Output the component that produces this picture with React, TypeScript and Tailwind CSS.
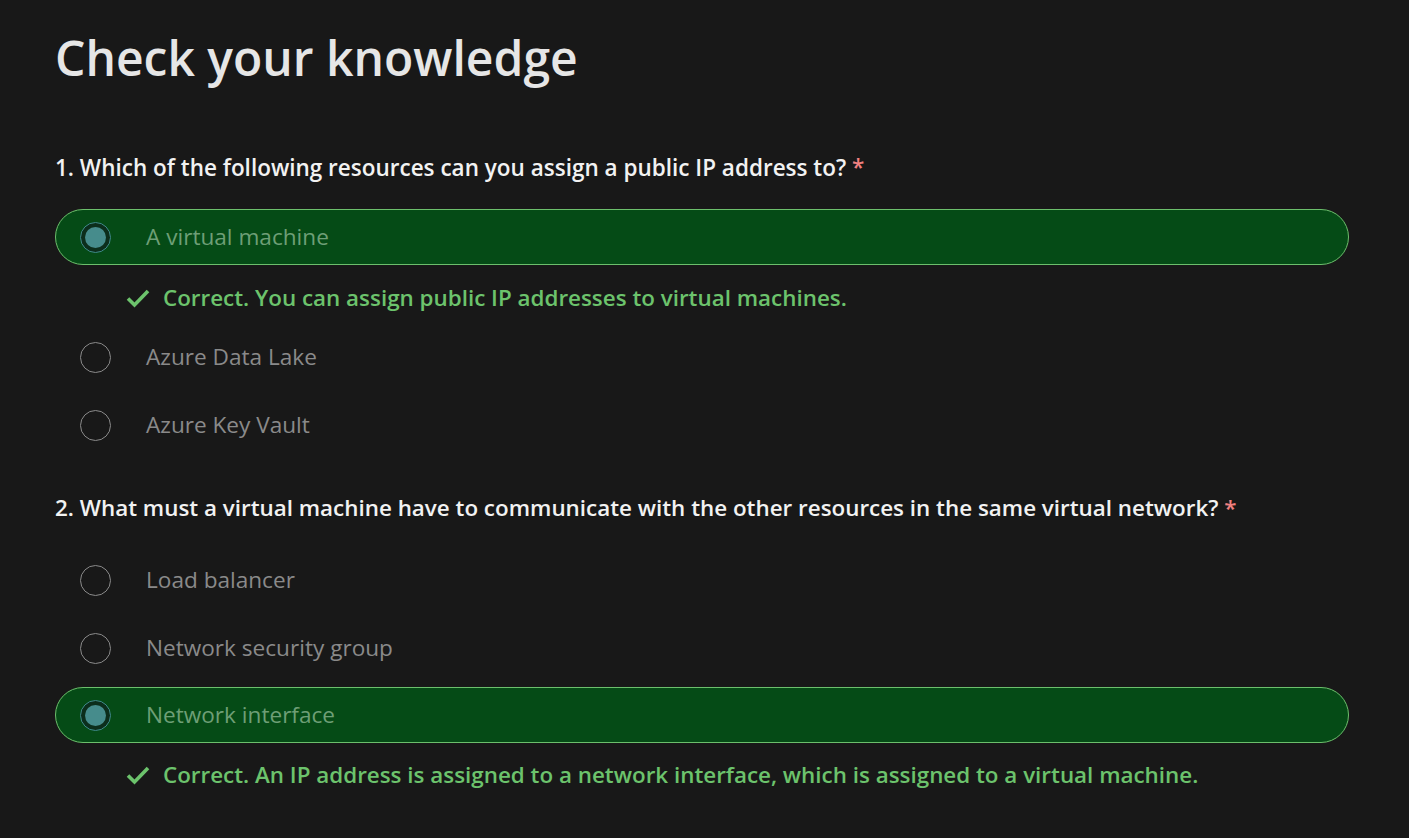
import React from "react";

const font = { fontFamily: '"Segoe UI", "Open Sans", "Noto Sans", sans-serif' };

function Radio({ selected }: { selected: boolean }) {
  if (selected) {
    return (
      <div className="w-[31px] h-[31px] rounded-full border border-[#3f8a8a] bg-[#0c2e1c] flex items-center justify-center shrink-0">
        <div className="w-[21px] h-[21px] rounded-full bg-[#468c8c]" />
      </div>
    );
  }
  return <div className="w-[31px] h-[31px] rounded-full border border-[#8a8a8a] shrink-0" />;
}

function Check() {
  return (
    <svg width="24" height="20" viewBox="0 0 24 20" className="shrink-0">
      <path d="M2 10.5 L8.5 17 L22 3" fill="none" stroke="#6cc36c" strokeWidth="3.6" />
    </svg>
  );
}

function Option({ label, selected, feedback, fbGap }: { label: string; selected?: boolean; feedback?: string; fbGap?: string }) {
  return (
    <div className="flex flex-col">
      <div
        className={
          selected
            ? "h-[56px] rounded-full border border-[#6cbf6c] bg-[#054b16] flex items-center pl-[24px]"
            : "h-[56px] rounded-full border border-transparent flex items-center pl-[24px]"
        }
      >
        <Radio selected={!!selected} />
        <span
          className={
            selected
              ? "ml-[35px] text-[22.6px] leading-[30px] text-[#6e9f76]"
              : "ml-[35px] text-[22.6px] leading-[30px] text-[#8a8a8a]"
          }
        >
          {label}
        </span>
      </div>
      {feedback && (
        <div className={fbGap === "a" ? "flex items-center pl-[71px] h-[44px] mt-[11px] mb-[-3px]" : "flex items-center pl-[71px] h-[44px] mt-[10px]"}>
          <Check />
          <span className="ml-[13px] text-[22.4px] leading-[30px] font-semibold text-[#6cc36c]">{feedback}</span>
        </div>
      )}
    </div>
  );
}

export default function App() {
  return (
    <div className="min-h-[838px] w-full bg-[#181818] text-[#e6e6e6] pl-[55px] pr-[60px] pt-[26px]" style={font}>
      <h1 className="text-[48px] leading-[64px] font-semibold text-[#e6e6e6]">Check your knowledge</h1>
      <div className="mt-[63px] text-[22.5px] leading-[30px] font-semibold text-[#f2f2f2]">
        1. Which of the following resources can you assign a public IP address to? <span className="text-[#f08080]">*</span>
      </div>
      <div className="mt-[26px] flex flex-col gap-[12px]">
        <Option label="A virtual machine" selected fbGap="a" feedback="Correct. You can assign public IP addresses to virtual machines." />
        <Option label="Azure Data Lake" />
        <Option label="Azure Key Vault" />
      </div>
      <div className="mt-[40px] text-[22.4px] leading-[30px] font-semibold text-[#f2f2f2]">
        2. What must a virtual machine have to communicate with the other resources in the same virtual network? <span className="text-[#f08080]">*</span>
      </div>
      <div className="mt-[29px] flex flex-col gap-[12px]">
        <Option label="Load balancer" />
        <Option label="Network security group" />
        <div className="mt-[-1px]">
          <Option label="Network interface" selected feedback="Correct. An IP address is assigned to a network interface, which is assigned to a virtual machine." />
        </div>
      </div>
    </div>
  );
}
